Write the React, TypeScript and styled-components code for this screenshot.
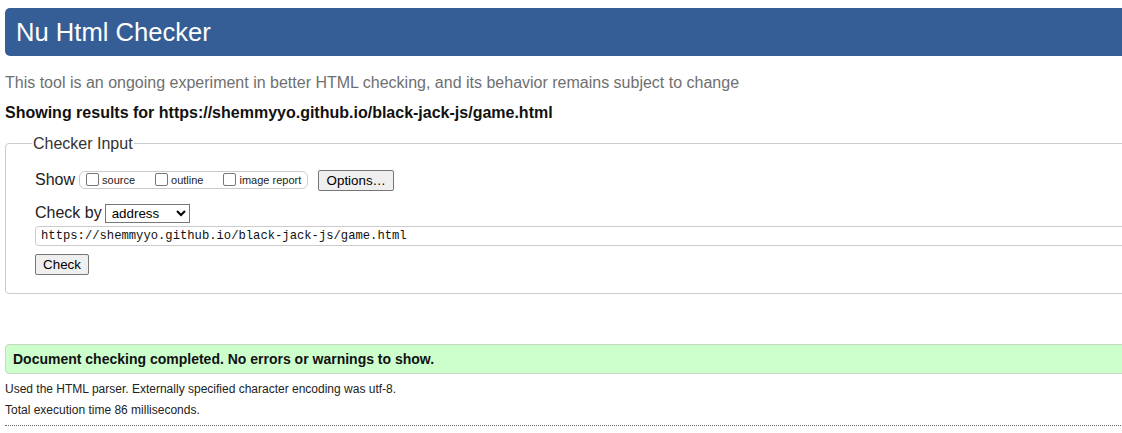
import React from "react";
import styled, { createGlobalStyle } from "styled-components";

const Global = createGlobalStyle`
  html, body { margin: 0; padding: 0; background: #fff; overflow: hidden; }
  body { font-family: "Liberation Sans", Arial, sans-serif; color: #222; }
`;

const Page = styled.div`
  width: 1140px;
  padding: 8px 0 0 5px;
`;

const Header = styled.h1`
  margin: 0;
  height: 48px;
  line-height: 48px;
  padding: 0 11px;
  background: #365e96;
  color: #fff;
  font-size: 25.6px;
  font-weight: normal;
  border-radius: 5px 0 0 5px;
`;

const Intro = styled.p`
  margin: 17px 0 0;
  font-size: 16px;
  line-height: 19px;
  color: #6f6f6f;
`;

const Results = styled.h2`
  margin: 11px 0 0;
  font-size: 16px;
  line-height: 19px;
  font-weight: bold;
  color: #111;
`;

const Fieldset = styled.fieldset`
  margin: 12px 0 0;
  padding: 0 0 18px 29px;
  border: 1px solid #ccc;
  border-radius: 4px;
`;

const Legend = styled.legend`
  font-size: 16px;
  line-height: 19px;
  padding: 0 1px;
  margin-left: -3px;
  color: #333;
`;

const Rows = styled.div`
  display: flex;
  flex-direction: column;
  padding-top: 16px;
`;

const Row = styled.div<{ $mt?: number }>`
  display: flex;
  align-items: center;
  margin-top: ${(p) => p.$mt ?? 0}px;
`;

const Label = styled.span`
  font-size: 16px;
  line-height: 22px;
  color: #222;
  margin-right: 4px;
`;

const OptionGroup = styled.span`
  display: inline-flex;
  align-items: center;
  height: 16px;
  border: 1px solid #ccc;
  border-radius: 6px;
  padding: 0 6px 0 6px;
  margin-right: 10px;
`;

const CheckLabel = styled.label<{ $mr?: number }>`
  display: inline-flex;
  align-items: center;
  font-size: 11px;
  color: #222;
  margin-right: ${(p) => p.$mr ?? 0}px;
`;

const Box = styled.input`
  appearance: none;
  width: 13px;
  height: 13px;
  margin: -1px 3px 0 0;
  border: 1px solid #767676;
  border-radius: 2px;
  background: #fff;
`;

const Button = styled.button<{ $w: number }>`
  width: ${(p) => p.$w}px;
  height: 21px;
  padding: 0;
  font-family: "Liberation Sans", Arial, sans-serif;
  font-size: 13.33px;
  color: #000;
  background: #efefef;
  border: 1px solid #767676;
  border-radius: 2px;
`;

const Select = styled.select`
  width: 85px;
  height: 19px;
  font-family: "Liberation Sans", Arial, sans-serif;
  font-size: 13.33px;
  color: #000;
  border: 1px solid #767676;
  border-radius: 0;
  background: #fff;
  padding: 0 0 0 2px;
  margin-left: -1px;
`;

const UrlInput = styled.input`
  box-sizing: border-box;
  width: 1100px;
  height: 20px;
  padding: 0 5px;
  font-family: "Liberation Mono", "DejaVu Sans Mono", monospace;
  font-size: 12.2px;
  color: #111;
  border: 1px solid #ccc;
  border-radius: 4px;
  outline: none;
`;

const Success = styled.div`
  margin-top: 50px;
  height: 28px;
  line-height: 28px;
  padding: 0 7px;
  background: #ccffcc;
  border: 1px solid #c6d8c6;
  border-radius: 4px;
  font-size: 14px;
  font-weight: bold;
  color: #111;
`;

const Detail = styled.p<{ $mt: number }>`
  margin: ${(p) => p.$mt}px 0 0;
  font-size: 12px;
  line-height: 14px;
  color: #222;
`;

const Rule = styled.hr`
  margin: 8px 0 0;
  border: 0;
  border-top: 1px dotted #666;
`;

export default function App() {
  return (
    <>
      <Global />
      <Page>
        <Header>Nu Html Checker</Header>
        <Intro>
          This tool is an ongoing experiment in better HTML checking, and its behavior remains subject to change
        </Intro>
        <Results>Showing results for https://shemmyyo.github.io/black-jack-js/game.html</Results>
        <Fieldset>
          <Legend>Checker Input</Legend>
          <Rows>
            <Row>
              <Label>Show</Label>
              <OptionGroup>
                <CheckLabel $mr={20}>
                  <Box type="checkbox" />source
                </CheckLabel>
                <CheckLabel $mr={20}>
                  <Box type="checkbox" />outline
                </CheckLabel>
                <CheckLabel>
                  <Box type="checkbox" />image report
                </CheckLabel>
              </OptionGroup>
              <Button $w={76}>Options…</Button>
            </Row>
            <Row $mt={11}>
              <Label>Check by</Label>
              <Select defaultValue="address">
                <option value="address">address</option>
                <option value="file">file upload</option>
                <option value="text">text input</option>
              </Select>
            </Row>
            <Row $mt={2}>
              <UrlInput readOnly value="https://shemmyyo.github.io/black-jack-js/game.html" />
            </Row>
            <Row $mt={8}>
              <Button $w={54}>Check</Button>
            </Row>
          </Rows>
        </Fieldset>
        <Success>Document checking completed. No errors or warnings to show.</Success>
        <Detail $mt={8}>Used the HTML parser. Externally specified character encoding was utf-8.</Detail>
        <Detail $mt={7}>Total execution time 86 milliseconds.</Detail>
        <Rule />
      </Page>
    </>
  );
}
